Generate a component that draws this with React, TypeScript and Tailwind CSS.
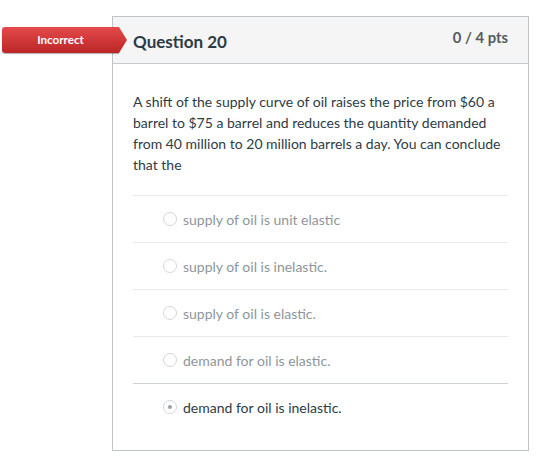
const answers = [
  { text: "supply of oil is unit elastic", selected: false },
  { text: "supply of oil is inelastic.", selected: false },
  { text: "supply of oil is elastic.", selected: false },
  { text: "demand for oil is elastic.", selected: false },
  { text: "demand for oil is inelastic.", selected: true },
];

function Radio({ checked }: { checked: boolean }) {
  return (
    <span className="w-[14px] h-[14px] rounded-full border border-[#d3d7da] bg-white flex items-center justify-center shrink-0">
      {checked && <span className="w-[4px] h-[4px] rounded-full bg-[#9aa0a4]" />}
    </span>
  );
}

export default function App() {
  return (
    <div
      className="relative w-[544px] h-[468px] bg-white"
      style={{ fontFamily: "Lato, 'Open Sans', sans-serif" }}
    >
      {/* result flag */}
      <div className="absolute left-[2px] top-[27px] flex items-center z-10">
        <div className="w-[117px] h-[26px] rounded-l-[3px] bg-gradient-to-b from-[#e4494a] to-[#bc2626] flex items-center justify-center text-white text-[11.6px] font-bold shadow-[0_1px_1px_rgba(0,0,0,0.3)]">
          Incorrect
        </div>
        <svg width="9" height="26" viewBox="0 0 9 26" className="-ml-px">
          <defs>
            <linearGradient id="flag" x1="0" y1="0" x2="0" y2="1">
              <stop offset="0" stopColor="#e4494a" />
              <stop offset="1" stopColor="#bc2626" />
            </linearGradient>
          </defs>
          <path d="M0 0 L1 0 L9 13 L1 26 L0 26 Z" fill="url(#flag)" />
        </svg>
      </div>

      <div className="ml-[112px] pt-[16px]">
        <div className="w-[417px] h-[435px] border border-[#bfc4c7] flex flex-col">
          <div className="h-[47px] bg-[#f5f5f5] border-b border-[#c7cbce] flex justify-between px-[20px]">
            <h2 className="pt-[13px] text-[17px] leading-[24px] font-bold text-[#2d3b45]">Question 20</h2>
            <span className="pt-[10px] text-[14.8px] leading-[20px] font-bold text-[#555a5e]">0 / 4 pts</span>
          </div>
          <div className="px-[20px] pt-[27px]">
            <p className="text-[14px] leading-[21px] text-[#2d3b45]">
              A shift of the supply curve of oil raises the price from $60 a barrel to $75 a barrel and reduces the quantity demanded from 40 million to 20 million barrels a day. You can conclude that the
            </p>
            <div className="mt-[20px]">
              {answers.map((a) => (
                <div
                  key={a.text}
                  className={`h-[47px] flex items-center gap-[6px] pl-[30px] border-t ${a.selected ? "border-[#cfd2d4]" : "border-[#e8eaeb]"}`}
                >
                  <Radio checked={a.selected} />
                  <span className={`text-[14px] ${a.selected ? "text-[#2d3b45]" : "text-[#8e969b]"}`}>{a.text}</span>
                </div>
              ))}
            </div>
          </div>
        </div>
      </div>
    </div>
  );
}
